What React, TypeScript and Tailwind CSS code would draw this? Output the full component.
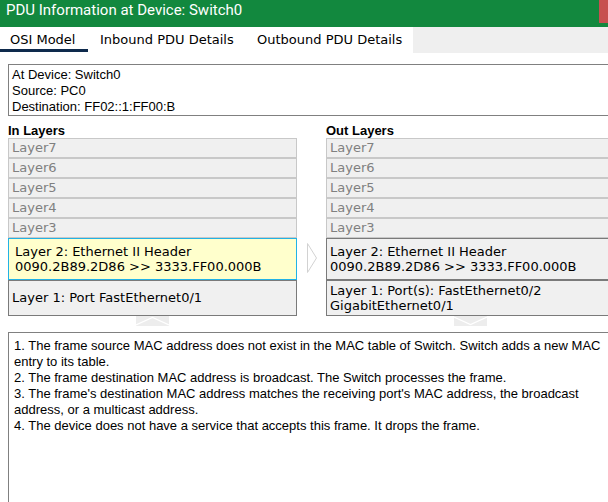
import React from "react";

const upperLayers = ["Layer7", "Layer6", "Layer5", "Layer4", "Layer3"];

const notes = [
  "1. The frame source MAC address does not exist in the MAC table of Switch. Switch adds a new MAC entry to its table.",
  "2. The frame destination MAC address is broadcast. The Switch processes the frame.",
  "3. The frame's destination MAC address matches the receiving port's MAC address, the broadcast address, or a multicast address.",
  "4. The device does not have a service that accepts this frame. It drops the frame.",
];

const GreyRows = () => (
  <>
    {upperLayers.map((l) => (
      <div
        key={l}
        className="h-[20px] border border-[#c8c8c8] bg-[#f0f0f0] pl-[3px] text-[#808080] leading-[18px]"
      >
        {l}
      </div>
    ))}
  </>
);

const Scroller = ({ up }: { up?: boolean }) => (
  <svg width="33" height="10" viewBox="0 0 33 10" className="mx-auto block">
    <rect x="0" y="0" width="33" height="10" fill="#ededed" />
    {up ? (
      <polyline points="0,9 16.5,1.5 33,9" fill="none" stroke="#ffffff" strokeWidth="1.2" />
    ) : (
      <polyline points="0,1 16.5,8.5 33,1" fill="none" stroke="#ffffff" strokeWidth="1.2" />
    )}
  </svg>
);

export default function App() {
  return (
    <div className="w-[608px] h-[502px] overflow-hidden bg-white text-black">
      {/* title bar */}
      <div className="h-[27px] bg-[#12883e] flex justify-between">
        <div className="pl-[6px] text-white text-[15px] leading-[20px] font-['Roboto',sans-serif]">
          PDU Information at Device: Switch0
        </div>
        <div className="w-[9px] h-[23px] bg-[#c75050]" />
      </div>

      {/* tabs */}
      <div className="h-[26px] flex text-[13px] font-['DejaVu_Sans',sans-serif]">
        <div className="relative w-[88px] pl-[10px] leading-[26px]">
          OSI Model
          <div className="absolute left-0 right-0 bottom-[1px] h-[3px] bg-[#0e2a4c]" />
        </div>
        <div className="w-[157px] pl-[12px] leading-[26px]">Inbound PDU Details</div>
        <div className="w-[168px] pl-[12px] leading-[26px]">Outbound PDU Details</div>
        <div className="flex-1 bg-[#efefef]" />
      </div>

      {/* device info */}
      <div className="mt-[11px] ml-[8px] w-[620px] h-[52px] border border-[#808080] pl-[3px] pt-[2px] text-[13px] leading-[16px] font-['Liberation_Sans',Arial,sans-serif]">
        <div>At Device: Switch0</div>
        <div>Source: PC0</div>
        <div>Destination: FF02::1:FF00:B</div>
      </div>

      {/* layers */}
      <div className="mt-[6px] ml-[8px] flex">
        <div className="w-[289px] shrink-0">
          <div className="h-[16px] leading-[17px] text-[13px] font-bold font-['Liberation_Sans',Arial,sans-serif]">
            In Layers
          </div>
          <div className="text-[13px] font-['DejaVu_Sans',sans-serif]">
            <GreyRows />
            <div className="h-[42px] border border-[#22b2e6] bg-[#ffffcc] pl-[6px] pt-[5px] leading-[15px]">
              <div>Layer 2: Ethernet II Header</div>
              <div>0090.2B89.2D86 &gt;&gt; 3333.FF00.000B</div>
            </div>
            <div className="h-[36px] border border-[#7a7a7a] bg-[#f0f0f0] pl-[3px] flex items-center">
              Layer 1: Port FastEthernet0/1
            </div>
          </div>
          <Scroller up />
        </div>

        <div className="w-[29px] shrink-0 pl-[10px] pt-[121px]">
          <svg width="10" height="30" viewBox="0 0 10 30" className="block">
            <polygon points="0.5,0.5 9.5,15 0.5,29.5" fill="#ffffff" stroke="#d2d2d2" strokeWidth="1" />
          </svg>
        </div>

        <div className="w-[289px] shrink-0">
          <div className="h-[16px] leading-[17px] text-[13px] font-bold font-['Liberation_Sans',Arial,sans-serif]">
            Out Layers
          </div>
          <div className="text-[13px] font-['DejaVu_Sans',sans-serif]">
            <GreyRows />
            <div className="h-[42px] border border-[#7a7a7a] bg-[#f0f0f0] pl-[3px] pt-[5px] leading-[15px]">
              <div>Layer 2: Ethernet II Header</div>
              <div>0090.2B89.2D86 &gt;&gt; 3333.FF00.000B</div>
            </div>
            <div className="h-[36px] border border-[#7a7a7a] bg-[#f0f0f0] pl-[3px] pt-[2px] leading-[15px]">
              <div>Layer 1: Port(s): FastEthernet0/2</div>
              <div>GigabitEthernet0/1</div>
            </div>
          </div>
          <Scroller />
        </div>
      </div>

      {/* notes */}
      <div className="mt-[6px] ml-[8px] w-[620px] h-[200px] border border-[#808080] pl-[5px] pr-[9px] pt-[5px] text-[13px] leading-[16px] font-['Liberation_Sans',Arial,sans-serif]">
        {notes.map((n) => (
          <div key={n}>{n}</div>
        ))}
      </div>
    </div>
  );
}
